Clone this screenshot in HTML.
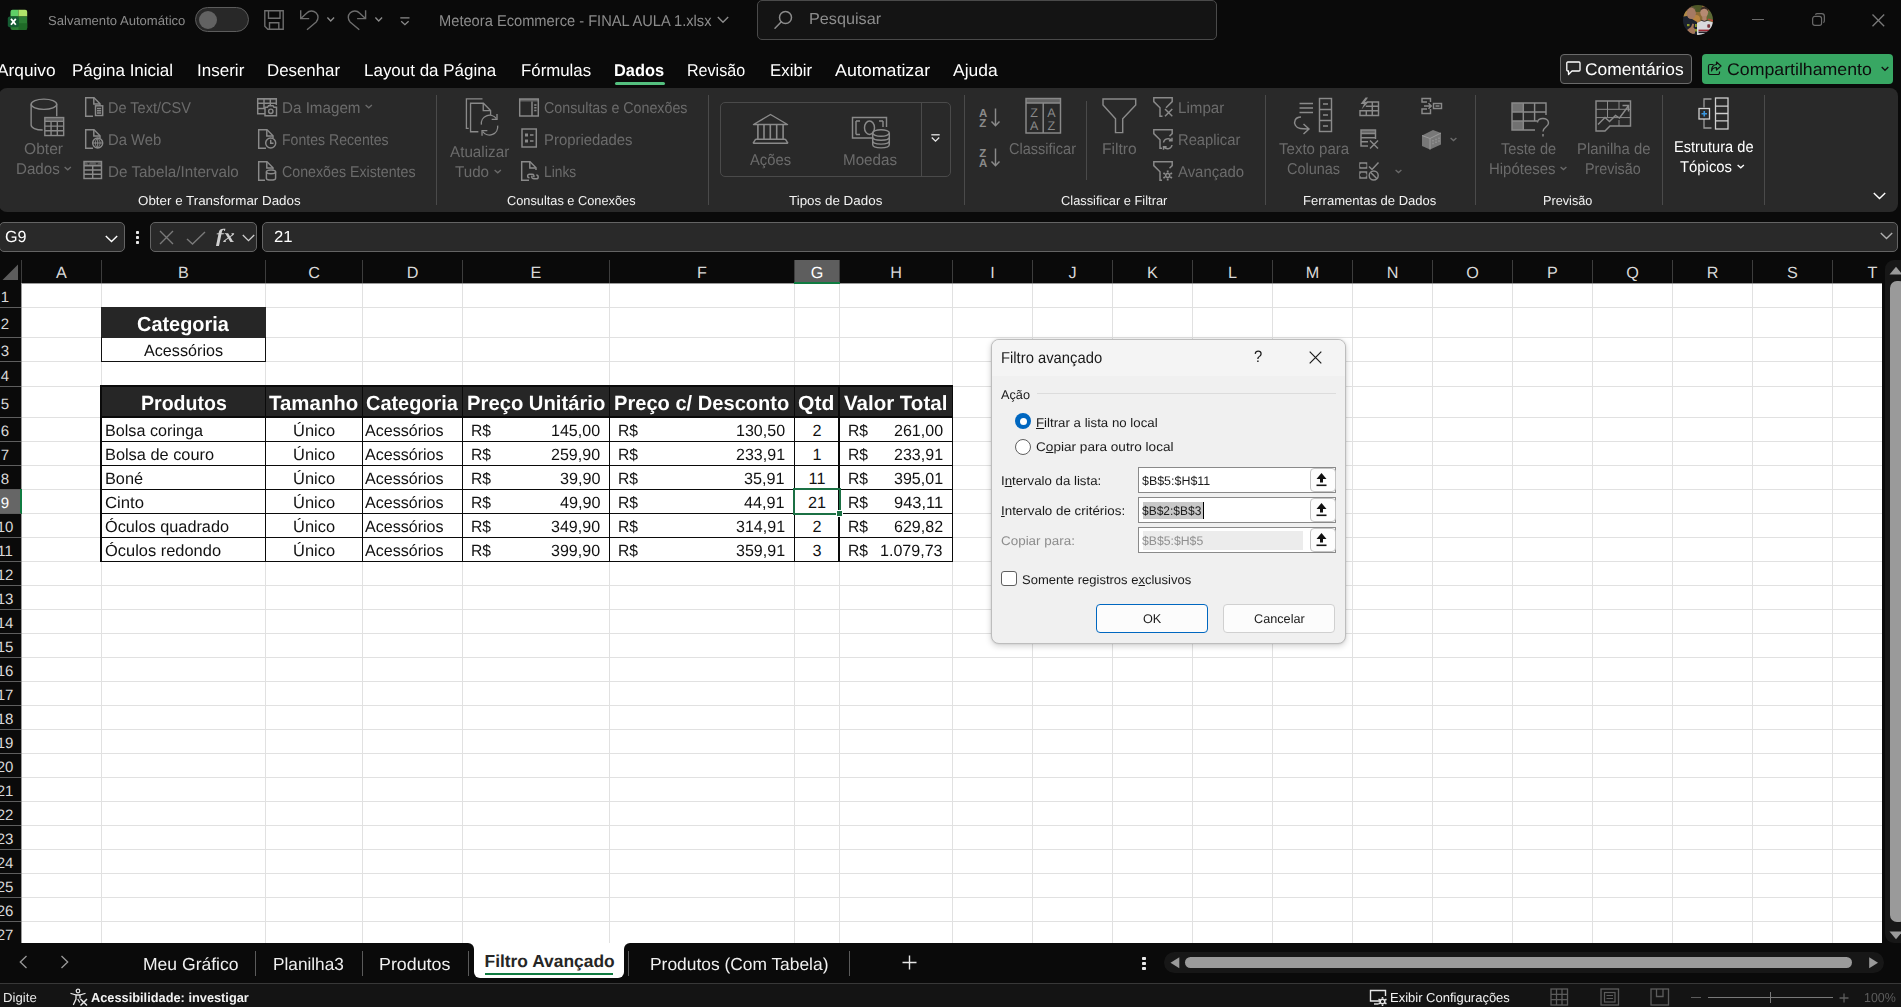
<!DOCTYPE html>
<html><head><meta charset="utf-8"><title>Excel</title>
<style>
html,body{margin:0;padding:0;}
body{width:1901px;height:1007px;overflow:hidden;background:#0a0a0a;position:relative;font-family:"Liberation Sans", sans-serif;}
body div,body svg,body span.t{position:absolute;box-sizing:border-box;}
span.t{white-space:nowrap;transform-origin:0 50%;display:block;text-rendering:geometricPrecision;}
svg text{text-rendering:geometricPrecision;}
svg{overflow:visible;}
</style></head><body>
<svg style="left:7px;top:9px;" width="21" height="22" viewBox="0 0 21 22" fill="none">
<path d="M3.500 2.800 A2 2 0 0 1 5.500 0.800 H11.500 V7.500 H3.500 Z" fill="#5fcf67"/>
<path d="M11.500 0.800 H18.200 A2 2 0 0 1 20.200 2.800 V7.500 H11.500 Z" fill="#b0e56a"/>
<path d="M3.500 7.500 H20.200 V19 A2 2 0 0 1 18.200 21 H5.500 A2 2 0 0 1 3.500 19 Z" fill="#2b7d33"/>
<path d="M11.500 14.200 H20.200 V19 A2 2 0 0 1 18.200 21 H11.500 Z" fill="#1f6a27"/>
<rect x="0.800" y="7.400" width="11.200" height="10.800" rx="2" fill="#155c33"/>
<path d="M4 9.900 L8.800 15.700 M8.800 9.900 L4 15.700" stroke="#fff" stroke-width="1.800"/>
</svg>
<span class="t" style="top:12.00px;font-size:13px;line-height:17px;height:17px;color:#8c8c8c;left:48.41px;transform:scaleX(1.0056);">Salvamento Automático</span>
<div style="left:195px;top:7px;width:54px;height:25px;background:#282828;border:1.500px solid #5c5c5c;border-radius:13px;"></div>
<div style="left:199px;top:11px;width:18px;height:18px;background:#626262;border-radius:9px;"></div>
<svg style="left:264px;top:10px;" width="20" height="20" viewBox="0 0 20 20" fill="none"><path d="M0.800 0.800 H19.200 V19.200 H3.800 L0.800 16.200 Z" stroke="#6e6e6e" stroke-width="1.400"/>
<path d="M4.500 0.800 V8.200 H16 V0.800 M5.500 19.200 V12.800 H14.800 V19.200" stroke="#6e6e6e" stroke-width="1.400"/></svg>
<svg style="left:300px;top:10px;" width="20" height="20" viewBox="0 0 20 20" fill="none"><path d="M0.700 0.300 V8.600 H9.200 M0.900 8.400 L6.800 3 A6.500 6.500 0 0 1 16.200 12 L7 19.700" stroke="#6e6e6e" stroke-width="1.400"/></svg>
<svg style="left:326.5px;top:17px;" width="8" height="6" viewBox="0 0 8 6" fill="none"><path d="M0.400 0.500 L3.700 4 L7.100 0.500" stroke="#8c8c8c" stroke-width="1.300"/></svg>
<svg style="left:347px;top:10px;" width="20" height="20" viewBox="0 0 20 20" fill="none"><path d="M18.600 0.300 V8.600 H10.100 M18.400 8.400 L12.500 3 A6.500 6.500 0 0 0 3.100 12 L12.300 19.700" stroke="#6e6e6e" stroke-width="1.400"/></svg>
<svg style="left:374.5px;top:17px;" width="8" height="6" viewBox="0 0 8 6" fill="none"><path d="M0.400 0.500 L3.700 4 L7.100 0.500" stroke="#8c8c8c" stroke-width="1.300"/></svg>
<svg style="left:399.5px;top:16.5px;" width="10" height="9" viewBox="0 0 10 9" fill="none"><path d="M0.300 0.800 H9.500 M1.200 4.300 L4.900 7.700 L8.600 4.300" stroke="#8c8c8c" stroke-width="1.300"/></svg>
<span class="t" style="top:11.70px;font-size:15.6px;line-height:20px;height:20px;color:#8c8c8c;left:439.34px;transform:scaleX(0.9406);">Meteora Ecommerce - FINAL AULA 1.xlsx</span>
<svg style="left:717px;top:16px;" width="12" height="8" viewBox="0 0 12 8" fill="none"><path d="M0.8 1 L6 6.2 L11.2 1" stroke="#8c8c8c" stroke-width="1.4"/></svg>
<div style="left:757px;top:0px;width:460px;height:39.5px;background:#141414;border:1px solid #4a4a4a;border-radius:5px;"></div>
<svg style="left:774px;top:10px;" width="20" height="20" viewBox="0 0 20 20" fill="none"><circle cx="11.5" cy="7.500" r="6" stroke="#8c8c8c" stroke-width="1.5"/><path d="M7.3 11.8 L1 18.200" stroke="#8c8c8c" stroke-width="1.5" stroke-linecap="round"/></svg>
<span class="t" style="top:8.80px;font-size:16px;line-height:21px;height:21px;color:#8c8c8c;left:809.27px;transform:scaleX(1.0124);">Pesquisar</span>
<svg style="left:1683px;top:5px;" width="30" height="30" viewBox="0 0 30 30" fill="none"><defs><clipPath id="av"><circle cx="15" cy="15" r="15"/></clipPath><filter id="bl" x="-10%" y="-10%" width="120%" height="120%"><feGaussianBlur stdDeviation="0.55"/></filter></defs>
<g clip-path="url(#av)"><g filter="url(#bl)"><rect x="-2" y="-2" width="34" height="34" fill="#8a6a35"/>
<rect x="9" y="-2" width="10" height="9" fill="#4d5626"/><rect x="24" y="6" width="8" height="10" fill="#5d6a35"/>
<ellipse cx="13" cy="14" rx="4" ry="4" fill="#b8843f"/><rect x="-2" y="6" width="6" height="6" fill="#b08a45"/>
<path d="M-2 12 L4 11 L14 17 V32 H-2 Z" fill="#1d212e"/>
<ellipse cx="8.300" cy="8.300" rx="4.600" ry="5.800" fill="#a67a63"/><path d="M4 5 Q8 0.500 13 4.500 L12.500 3.500 Q8 0 4 4 Z" fill="#6a5547"/>
<rect x="4" y="19" width="2.500" height="2.200" fill="#8c9a2a"/><rect x="12" y="19" width="1.800" height="3" fill="#8c9a2a"/><rect x="12" y="24" width="2" height="2.500" fill="#8c9a2a"/>
<path d="M4 25 L8 22 L9.500 18.500 L11 19 L10.500 22.500 L12 24 V28.500 L8 29.500 Z" fill="#a4775c"/>
<path d="M14 18 L18 16 H25 L31 17.500 V32 H14 Z" fill="#d9d9dc"/>
<ellipse cx="21.200" cy="7.200" rx="3.900" ry="5.200" fill="#b58a72"/><path d="M17.300 6 Q17.500 1.500 21.500 1.800 Q25.500 2 25.200 6.500 Q24 3.500 21 3.800 Q18.300 4 17.300 6 Z" fill="#3b2c25"/>
<rect x="19.300" y="11" width="4" height="5" fill="#ae846c"/><path d="M18.300 15.300 Q21.300 17.500 24.500 15.300" stroke="#2a2428" stroke-width="0.900" fill="none"/>
<path d="M24.500 14.500 L30 16.500 L30 15 L25.500 13.500 Z" fill="#c0443a"/>
<rect x="24.300" y="19.300" width="2.800" height="3.500" rx="0.800" fill="#7a3038"/>
<rect x="15.500" y="24.600" width="13" height="1.700" fill="#9a2630"/><rect x="15.500" y="26.600" width="12" height="1.500" fill="#22232a"/>
</g></g></svg>
<div style="left:1751.7px;top:18.7px;width:12.7px;height:1.3px;background:#6a6a6a;"></div>
<svg style="left:1811.5px;top:13.3px;" width="13" height="13" viewBox="0 0 14 14" fill="none"><rect x="0.7" y="3.7" width="9.6" height="9.6" rx="2.3" stroke="#6a6a6a" stroke-width="1.3"/><path d="M3.6 1.7 A2.6 2.6 0 0 1 5.8 0.7 H10.4 A2.9 2.9 0 0 1 13.3 3.6 V8.2 A2.6 2.6 0 0 1 12.3 10.4" stroke="#6a6a6a" stroke-width="1.3"/></svg>
<svg style="left:1871.7px;top:13.5px;" width="12.7" height="12.7" viewBox="0 0 12.7 12.7" fill="none"><path d="M0.5 0.5 L12.200 12.200 M12.200 0.5 L0.5 12.200" stroke="#7a7a7a" stroke-width="1.3"/></svg>
<span class="t" style="top:59.80px;font-size:17px;line-height:22px;height:22px;color:#fff;left:-2.78px;transform:scaleX(1.0167);">Arquivo</span>
<span class="t" style="top:59.80px;font-size:17px;line-height:22px;height:22px;color:#fff;left:72.24px;transform:scaleX(0.9998);">Página Inicial</span>
<span class="t" style="top:59.80px;font-size:17px;line-height:22px;height:22px;color:#fff;left:196.73px;transform:scaleX(1.0015);">Inserir</span>
<span class="t" style="top:59.80px;font-size:17px;line-height:22px;height:22px;color:#fff;left:267.24px;transform:scaleX(0.9917);">Desenhar</span>
<span class="t" style="top:59.80px;font-size:17px;line-height:22px;height:22px;color:#fff;left:364.24px;transform:scaleX(0.9982);">Layout da Página</span>
<span class="t" style="top:59.80px;font-size:17px;line-height:22px;height:22px;color:#fff;left:521.24px;transform:scaleX(0.9894);">Fórmulas</span>
<span class="t" style="top:59.80px;font-size:17px;line-height:22px;height:22px;color:#fff;left:687.28px;transform:scaleX(0.9460);">Revisão</span>
<span class="t" style="top:59.80px;font-size:17px;line-height:22px;height:22px;color:#fff;left:770.24px;transform:scaleX(0.9903);">Exibir</span>
<span class="t" style="top:59.80px;font-size:17px;line-height:22px;height:22px;color:#fff;left:835.20px;transform:scaleX(1.0485);">Automatizar</span>
<span class="t" style="top:59.80px;font-size:17px;line-height:22px;height:22px;color:#fff;left:953.22px;transform:scaleX(1.0258);">Ajuda</span>
<span class="t" style="top:59.80px;font-size:17px;line-height:22px;height:22px;color:#fff;font-weight:700;left:614.26px;transform:scaleX(0.9641);">Dados</span>
<div style="left:615px;top:82px;width:50px;height:3px;background:#54c07f;border-radius:1.5px;"></div>
<div style="left:1560px;top:54px;width:132px;height:30px;background:#262626;border:1px solid #6a6a6a;border-radius:4px;"></div>
<svg style="left:1566px;top:61px;" width="16" height="15" viewBox="0 0 16 15" fill="none"><path d="M1.5 1 H13 A1 1 0 0 1 14 2 V9 A1 1 0 0 1 13 10 H6 L2.5 13.500 V10 H1.5 A1 1 0 0 1 0.8 9 V2 A1 1 0 0 1 1.5 1 Z" stroke="#fff" stroke-width="1.3" stroke-linejoin="round"/></svg>
<span class="t" style="top:58.80px;font-size:17px;line-height:22px;height:22px;color:#fff;left:1585.22px;transform:scaleX(1.0231);">Comentários</span>
<div style="left:1702px;top:54px;width:191px;height:30px;background:#38a763;border-radius:4px;"></div>
<svg style="left:1707px;top:61px;" width="16" height="15" viewBox="0 0 16 15" fill="none"><path d="M6.500 3.500 H3 A1.500 1.500 0 0 0 1.500 5 V12 A1.500 1.500 0 0 0 3 13.500 H11 A1.500 1.500 0 0 0 12.500 12 V10.500 M9.500 1 L14 5 L9.500 9 V6.500 Q5.500 6.500 4.500 10 Q4.500 4 9.500 3.500 Z" stroke="#111" stroke-width="1.2" stroke-linejoin="round"/></svg>
<span class="t" style="top:58.80px;font-size:17px;line-height:22px;height:22px;color:#0d0d0d;left:1727.20px;transform:scaleX(1.0425);">Compartilhamento</span>
<svg style="left:1881px;top:66px;" width="8" height="6" viewBox="0 0 8 6" fill="none"><path d="M0.7 1 L4 4.3 L7.3 1" stroke="#111" stroke-width="1.3"/></svg>
<div style="left:-1.5px;top:222px;width:126px;height:30px;background:#292929;border:1px solid #646464;border-radius:5px;"></div>
<span class="t" style="top:226.50px;font-size:16px;line-height:21px;height:21px;color:#fff;left:4.77px;transform:scaleX(1.0092);">G9</span>
<svg style="left:105px;top:235.2px;" width="13" height="8" viewBox="0 0 13 8" fill="none"><path d="M0.800 1 L6.500 6.600 L12.200 1" stroke="#fff" stroke-width="1.400"/></svg>
<div style="left:135.5px;top:231px;width:3.5px;height:3.3px;background:#e9e9e9;border-radius:0.8px;"></div>
<div style="left:135.5px;top:236px;width:3.5px;height:3.3px;background:#e9e9e9;border-radius:0.8px;"></div>
<div style="left:135.5px;top:241px;width:3.5px;height:3.3px;background:#e9e9e9;border-radius:0.8px;"></div>
<div style="left:150px;top:222px;width:107px;height:30px;background:#292929;border:1px solid #646464;border-radius:5px;"></div>
<svg style="left:158.5px;top:230px;" width="15" height="15" viewBox="0 0 15 15" fill="none"><path d="M1 1 L14 14 M14 1 L1 14" stroke="#7a7a7a" stroke-width="1.400"/></svg>
<svg style="left:186px;top:231px;" width="20" height="14" viewBox="0 0 20 14" fill="none"><path d="M1 8 L6.500 13 L19 1" stroke="#7a7a7a" stroke-width="1.400"/></svg>
<span class="t" style="top:224.00px;font-size:19px;line-height:25px;height:25px;color:#d0d0d0;font-weight:700;font-style:italic;font-family:'Liberation Serif', serif;left:216.49px;transform:scaleX(1.1837);">fx</span>
<svg style="left:241.5px;top:234.3px;" width="13" height="8" viewBox="0 0 13 8" fill="none"><path d="M0.800 1 L6.500 6.600 L12.200 1" stroke="#d0d0d0" stroke-width="1.300"/></svg>
<div style="left:262px;top:222px;width:1635.5px;height:30px;background:#292929;border:1px solid #646464;border-radius:5px;"></div>
<span class="t" style="top:226.50px;font-size:16px;line-height:21px;height:21px;color:#fff;left:274.25px;transform:scaleX(1.0418);">21</span>
<svg style="left:1879.5px;top:231.8px;" width="13" height="8" viewBox="0 0 13 8" fill="none"><path d="M0.800 1 L6.500 6.600 L12.200 1" stroke="#b0b0b0" stroke-width="1.400"/></svg>
<div style="left:-1px;top:88px;width:1898.7px;height:124px;background:#292929;border-radius:8px;"></div>
<div style="left:436px;top:94.5px;width:1px;height:110px;background:#4a4a4a;"></div>
<div style="left:708px;top:94.5px;width:1px;height:110px;background:#4a4a4a;"></div>
<div style="left:964px;top:94.5px;width:1px;height:110px;background:#4a4a4a;"></div>
<div style="left:1265px;top:94.5px;width:1px;height:110px;background:#4a4a4a;"></div>
<div style="left:1475px;top:94.5px;width:1px;height:110px;background:#4a4a4a;"></div>
<div style="left:1662px;top:94.5px;width:1px;height:110px;background:#4a4a4a;"></div>
<div style="left:1764px;top:94.5px;width:1px;height:110px;background:#4a4a4a;"></div>
<div style="left:1086px;top:101px;width:1px;height:78.5px;background:#4a4a4a;"></div>
<svg style="left:29.5px;top:98px;" width="35" height="38.5" viewBox="0 0 36 40" fill="none"><ellipse cx="14.300" cy="6.500" rx="13.300" ry="5.300" stroke="#8a8a8a" stroke-width="1.45"/>
<path d="M1 6.500 V28 C1 31 6 33.200 13 33.300 M27.600 6.500 V19" stroke="#8a8a8a" stroke-width="1.45"/>
<rect x="15.200" y="20.300" width="19.600" height="18.700" stroke="#8a8a8a" stroke-width="1.45"/>
<rect x="15.200" y="20.300" width="19.600" height="4" fill="#8a8a8a" opacity="0.55"/>
<path d="M15.200 24.300 H34.800 M15.200 29.200 H34.800 M15.200 34.100 H34.800 M21.700 24.300 V39 M28.200 24.300 V39" stroke="#8a8a8a" stroke-width="1.45"/></svg>
<span class="t" style="top:140.30px;font-size:15.6px;line-height:20px;height:20px;color:#6b6b6b;left:24.30px;transform:scaleX(1.0004);">Obter</span>
<span class="t" style="top:159.70px;font-size:15.6px;line-height:20px;height:20px;color:#6b6b6b;left:15.82px;transform:scaleX(0.9697);">Dados</span>
<svg style="left:63.5px;top:165.5px;" width="7.5" height="6" viewBox="0 0 7.5 6" fill="none"><path d="M0.6 1 L3.75 3.8499999999999996 L6.9 1" stroke="#6b6b6b" stroke-width="1.3"/></svg>
<svg style="left:84px;top:96.8px;" width="20" height="20" viewBox="0 0 20 20" fill="none"><path d="M9 19.300 H1.700 V0.700 H10 L16 6.700 V9" stroke="#8a8a8a" stroke-width="1.45"/><path d="M9.800 0.900 V7 H15.800" stroke="#8a8a8a" stroke-width="1.45"/><rect x="11.500" y="8.800" width="7.200" height="9.700" stroke="#8a8a8a" stroke-width="1.45"/><path d="M13 11.500 H17.200 M13 13.700 H17.200 M13 15.900 H17.200" stroke="#8a8a8a" stroke-width="1.45"/></svg>
<svg style="left:84px;top:128.8px;" width="20" height="20" viewBox="0 0 20 20" fill="none"><path d="M9 19.300 H1.700 V0.700 H10 L16 6.700 V9" stroke="#8a8a8a" stroke-width="1.45"/><path d="M9.800 0.900 V7 H15.800" stroke="#8a8a8a" stroke-width="1.45"/><circle cx="13.700" cy="14" r="5" stroke="#8a8a8a" stroke-width="1.45"/><path d="M8.700 14 H18.700 M13.700 9 V19 M13.700 9 C10.500 12 10.500 16 13.700 19 M13.700 9 C16.900 12 16.900 16 13.700 19" stroke="#8a8a8a" stroke-width="1"/></svg>
<svg style="left:83px;top:160px;" width="20" height="20" viewBox="0 0 20 20" fill="none"><rect x="1" y="1.500" width="17.500" height="17" stroke="#8a8a8a" stroke-width="1.45"/><rect x="1" y="1.500" width="17.500" height="4.200" fill="#8a8a8a" opacity="0.5"/>
<path d="M1 5.700 H18.500 M1 10 H18.500 M1 14.300 H18.500 M9.700 5.700 V18.500" stroke="#8a8a8a" stroke-width="1.45"/><path d="M4 2.700 L5.500 4.700 L7 2.700 Z M12.400 2.700 L13.900 4.700 L15.400 2.700 Z" fill="#292929"/></svg>
<span class="t" style="top:98.50px;font-size:15.6px;line-height:20px;height:20px;color:#6b6b6b;left:107.55px;transform:scaleX(0.9307);">De Text/CSV</span>
<span class="t" style="top:130.50px;font-size:15.6px;line-height:20px;height:20px;color:#6b6b6b;left:107.53px;transform:scaleX(0.9510);">Da Web</span>
<span class="t" style="top:162.50px;font-size:15.6px;line-height:20px;height:20px;color:#6b6b6b;left:107.52px;transform:scaleX(0.9757);">De Tabela/Intervalo</span>
<svg style="left:257px;top:96.5px;" width="20" height="20" viewBox="0 0 20 20" fill="none"><path d="M8 16.700 H0.700 V1.700 H19.300 V8" stroke="#8a8a8a" stroke-width="1.45"/><path d="M0.700 6.300 H19.300 M0.700 11.500 H8 M7 1.700 V11.500 M13.300 1.700 V8" stroke="#8a8a8a" stroke-width="1.45"/>
<rect x="0.700" y="1.700" width="18.600" height="1.500" fill="#8a8a8a" opacity="0.5"/>
<path d="M8 10.300 H10.500 L11.500 8.700 H16 L17 10.300 H19.500 V18.800 H8 Z" stroke="#8a8a8a" stroke-width="1.45"/><circle cx="13.800" cy="14.300" r="2.200" stroke="#8a8a8a" stroke-width="1.45"/></svg>
<svg style="left:257px;top:128.8px;" width="20" height="20" viewBox="0 0 20 20" fill="none"><path d="M9 19.300 H1.700 V0.700 H10 L16 6.700 V9" stroke="#8a8a8a" stroke-width="1.45"/><path d="M9.800 0.900 V7 H15.800" stroke="#8a8a8a" stroke-width="1.45"/><circle cx="13.700" cy="14" r="5" stroke="#8a8a8a" stroke-width="1.45"/><path d="M13.700 10.800 V14.300 H16.500" stroke="#8a8a8a" stroke-width="1.45"/></svg>
<svg style="left:257px;top:160.8px;" width="20" height="20" viewBox="0 0 20 20" fill="none"><path d="M8 19.300 H1.700 V0.700 H10 L16 6.700 V8.500" stroke="#8a8a8a" stroke-width="1.45"/><path d="M9.800 0.900 V7 H15.800" stroke="#8a8a8a" stroke-width="1.45"/><ellipse cx="14" cy="10.800" rx="4.600" ry="1.900" stroke="#8a8a8a" stroke-width="1.45"/><path d="M9.400 10.800 V17.200 C9.400 19.700 18.600 19.700 18.600 17.200 V10.800" stroke="#8a8a8a" stroke-width="1.45"/></svg>
<span class="t" style="top:98.50px;font-size:15.6px;line-height:20px;height:20px;color:#6b6b6b;left:281.82px;transform:scaleX(0.9740);">Da Imagem</span>
<svg style="left:365px;top:103.5px;" width="7.5" height="6" viewBox="0 0 7.5 6" fill="none"><path d="M0.6 1 L3.75 3.8499999999999996 L6.9 1" stroke="#6b6b6b" stroke-width="1.3"/></svg>
<span class="t" style="top:130.50px;font-size:15.6px;line-height:20px;height:20px;color:#6b6b6b;left:281.87px;transform:scaleX(0.9035);">Fontes Recentes</span>
<span class="t" style="top:162.50px;font-size:15.6px;line-height:20px;height:20px;color:#6b6b6b;left:281.86px;transform:scaleX(0.9114);">Conexões Existentes</span>
<span class="t" style="top:192.00px;font-size:13px;line-height:17px;height:17px;color:#f2f2f2;left:137.60px;transform:scaleX(1.0279);">Obter e Transformar Dados</span>
<svg style="left:464.5px;top:97.7px;" width="35" height="38.6" viewBox="0 0 37 42" fill="none"><path d="M3.500 33 H1 V1 H18.500" stroke="#8a8a8a" stroke-width="1.45"/>
<path d="M14 36.700 H5.500 V5.700 H19.500 L27.300 13.500 V18.500" stroke="#8a8a8a" stroke-width="1.45"/><path d="M19.300 6 V13.700 H27" stroke="#8a8a8a" stroke-width="1.45"/>
<path d="M17.300 29 A9 9 0 0 1 33.500 22.500 M35 30 A9 9 0 0 1 18.800 36.500" stroke="#8a8a8a" stroke-width="1.45"/>
<path d="M34.300 17.500 V23.300 H28.500 M18 41.200 V35.500 H23.800" stroke="#8a8a8a" stroke-width="1.45"/></svg>
<span class="t" style="top:142.70px;font-size:15.6px;line-height:20px;height:20px;color:#6b6b6b;left:449.81px;transform:scaleX(0.9760);">Atualizar</span>
<span class="t" style="top:162.70px;font-size:15.6px;line-height:20px;height:20px;color:#6b6b6b;left:454.82px;transform:scaleX(0.9727);">Tudo</span>
<svg style="left:493.7px;top:168.5px;" width="7.5" height="6" viewBox="0 0 7.5 6" fill="none"><path d="M0.6 1 L3.75 3.8499999999999996 L6.9 1" stroke="#6b6b6b" stroke-width="1.3"/></svg>
<svg style="left:519px;top:97.5px;" width="20" height="20" viewBox="0 0 20 20" fill="none"><rect x="0.700" y="1" width="18.600" height="17" stroke="#8a8a8a" stroke-width="1.45"/><rect x="0.700" y="1" width="18.600" height="2.500" fill="#8a8a8a" opacity="0.6"/><path d="M13 3.500 V18 M15.200 7 H17.500 M15.200 9.700 H17.500 M15.200 12.400 H17.500" stroke="#8a8a8a" stroke-width="1.45"/></svg>
<svg style="left:519px;top:128.3px;" width="20" height="20" viewBox="0 0 20 20" fill="none"><rect x="3" y="1" width="14.300" height="18" stroke="#8a8a8a" stroke-width="1.45"/><rect x="6" y="5.500" width="3" height="3" fill="#8a8a8a"/><rect x="6" y="11.500" width="3" height="3" fill="#8a8a8a"/><path d="M11 7 H14.500 M11 13 H14.500" stroke="#8a8a8a" stroke-width="1.45"/></svg>
<svg style="left:520px;top:160.5px;" width="20" height="20" viewBox="0 0 20 20" fill="none"><path d="M9 19.300 H1.700 V0.700 H10 L16 6.700 V9" stroke="#8a8a8a" stroke-width="1.45"/><path d="M9.800 0.900 V7 H15.800" stroke="#8a8a8a" stroke-width="1.45"/><path d="M9.500 16.800 C7 16.800 7 13.200 9.500 13.200 H12 C14 13.200 14.500 15 13.500 16.200 M16.300 14 C18.800 14 18.800 17.800 16.300 17.800 H13.800 C11.800 17.800 11.300 16 12.300 14.800" stroke="#8a8a8a" stroke-width="1.45"/></svg>
<span class="t" style="top:98.50px;font-size:15.6px;line-height:20px;height:20px;color:#6b6b6b;left:543.86px;transform:scaleX(0.9146);">Consultas e Conexões</span>
<span class="t" style="top:130.50px;font-size:15.6px;line-height:20px;height:20px;color:#6b6b6b;left:543.83px;transform:scaleX(0.9542);">Propriedades</span>
<span class="t" style="top:162.50px;font-size:15.6px;line-height:20px;height:20px;color:#6b6b6b;left:543.88px;transform:scaleX(0.8848);">Links</span>
<span class="t" style="top:192.00px;font-size:13px;line-height:17px;height:17px;color:#f2f2f2;left:507.43px;transform:scaleX(0.9827);">Consultas e Conexões</span>
<div style="left:720px;top:102px;width:231px;height:75px;border:1px solid #4a4a4a;border-radius:5px;"></div>
<div style="left:921px;top:102px;width:1px;height:75px;background:#4a4a4a;"></div>
<svg style="left:752px;top:113px;" width="37" height="32" viewBox="0 0 37 32" fill="none"><path d="M1.500 11.500 L18.500 1.500 L35.500 11.500 Z" stroke="#8a8a8a" stroke-width="1.45" stroke-linejoin="round"/>
<path d="M5.900 12 V26 M12 12 V26 M18.300 12 V26 M24.700 12 V26 M31.100 12 V26" stroke="#8a8a8a" stroke-width="1.600"/>
<path d="M3.500 26.300 H33.500 M1 30.300 H36 M3.500 26.300 L1 30.300 M33.500 26.300 L36 30.300" stroke="#8a8a8a" stroke-width="1.45"/></svg>
<span class="t" style="top:151.00px;font-size:15.6px;line-height:20px;height:20px;color:#6b6b6b;left:750.34px;transform:scaleX(0.9462);">Ações</span>
<svg style="left:851px;top:116px;" width="40" height="34" viewBox="0 0 40 34" fill="none"><path d="M21 22 H1.500 V1.500 H35.500 V11" stroke="#8a8a8a" stroke-width="1.45"/><path d="M5 5 H9 M5 5 V18.500 M5 18.500 H9 M32 5 H28 M32 5 V11" stroke="#8a8a8a" stroke-width="1.45"/>
<ellipse cx="18.500" cy="11.700" rx="5" ry="6.700" stroke="#8a8a8a" stroke-width="1.45"/>
<ellipse cx="30" cy="17" rx="8.300" ry="3.300" stroke="#8a8a8a" stroke-width="1.45"/><path d="M21.700 17 V28.500 C21.700 33 38.300 33 38.300 28.500 V17 M21.700 21 C21.700 25.300 38.300 25.300 38.300 21 M21.700 24.800 C21.700 29.200 38.300 29.200 38.300 24.800" stroke="#8a8a8a" stroke-width="1.45"/></svg>
<span class="t" style="top:151.00px;font-size:15.6px;line-height:20px;height:20px;color:#6b6b6b;left:843.32px;transform:scaleX(0.9735);">Moedas</span>
<svg style="left:931.3px;top:134px;" width="9" height="8" viewBox="0 0 9 8" fill="none"><path d="M0.300 0.800 H8.700" stroke="#e6e6e6" stroke-width="1.300"/><path d="M0.800 3.500 L4.500 7.200 L8.200 3.500" stroke="#e6e6e6" stroke-width="1.300"/></svg>
<span class="t" style="top:192.00px;font-size:13px;line-height:17px;height:17px;color:#f2f2f2;left:788.90px;transform:scaleX(1.0305);">Tipos de Dados</span>
<svg style="left:979px;top:106.5px;" width="22" height="21" viewBox="0 0 22 21" fill="none"><text x="0" y="9.5" font-family="Liberation Sans" font-weight="700" font-size="11.500" fill="#8a8a8a">A</text><text x="0.3" y="20" font-family="Liberation Sans" font-weight="700" font-size="11.500" fill="#8a8a8a">Z</text><path d="M16.500 1.500 V18.500 M12.500 14.500 L16.500 18.700 L20.500 14.500" stroke="#8a8a8a" stroke-width="1.45"/></svg>
<svg style="left:979px;top:146.5px;" width="22" height="21" viewBox="0 0 22 21" fill="none"><text x="0.3" y="9.5" font-family="Liberation Sans" font-weight="700" font-size="11.500" fill="#8a8a8a">Z</text><text x="0" y="20" font-family="Liberation Sans" font-weight="700" font-size="11.500" fill="#8a8a8a">A</text><path d="M16.500 1.500 V18.500 M12.500 14.500 L16.500 18.700 L20.500 14.500" stroke="#8a8a8a" stroke-width="1.45"/></svg>
<svg style="left:1025px;top:97px;" width="37" height="38" viewBox="0 0 37 38" fill="none"><rect x="1" y="1.500" width="34.500" height="34.500" stroke="#8a8a8a" stroke-width="1.45"/><rect x="1" y="1.500" width="34.500" height="4.500" fill="#8a8a8a" opacity="0.6"/><path d="M1 6 H35.500 M18.200 6 V36" stroke="#8a8a8a" stroke-width="1.45"/><text x="5.3" y="19.5" font-family="Liberation Sans" font-size="12.500" fill="#8a8a8a">Z</text><text x="5" y="32.5" font-family="Liberation Sans" font-size="12.500" fill="#8a8a8a">A</text><text x="22.3" y="19.5" font-family="Liberation Sans" font-size="12.500" fill="#8a8a8a">A</text><text x="22.6" y="32.5" font-family="Liberation Sans" font-size="12.500" fill="#8a8a8a">Z</text></svg>
<span class="t" style="top:140.00px;font-size:15.6px;line-height:20px;height:20px;color:#6b6b6b;left:1009.35px;transform:scaleX(0.9318);">Classificar</span>
<svg style="left:1101px;top:97px;" width="37" height="38" viewBox="0 0 37 38" fill="none"><path d="M2 2 H34.700 V8 L21.700 21.700 V35.600 H14.500 V21.700 L2 8 Z" stroke="#8a8a8a" stroke-width="1.45" stroke-linejoin="miter"/></svg>
<span class="t" style="top:140.00px;font-size:15.6px;line-height:20px;height:20px;color:#6b6b6b;left:1102.30px;transform:scaleX(1.0017);">Filtro</span>
<svg style="left:1153px;top:96.5px;" width="20" height="20" viewBox="0 0 20 20" fill="none"><path d="M9.500 19.300 H7 V10.700 L0.800 4.600 V0.800 H19.200 V4.600 L13 10.700" stroke="#8a8a8a" stroke-width="1.45"/><path d="M12 12 L19.300 19.300 M19.300 12 L12 19.300" stroke="#8a8a8a" stroke-width="1.45"/></svg>
<svg style="left:1153px;top:128.5px;" width="20" height="20" viewBox="0 0 20 20" fill="none"><path d="M9 19.300 H7 V10.700 L0.800 4.600 V0.800 H19.200 V4.600 L16.500 7.300" stroke="#8a8a8a" stroke-width="1.45"/><path d="M10.500 13.500 A4.500 4.500 0 0 1 18.500 11.500 M19 16 A4.500 4.500 0 0 1 11 18 M19 8.700 V11.800 H15.900 M10.500 20.800 V17.700 H13.600" stroke="#8a8a8a" stroke-width="1.45"/></svg>
<svg style="left:1153px;top:160.5px;" width="20" height="20" viewBox="0 0 20 20" fill="none"><path d="M9 19.300 H7 V10.700 L0.800 4.600 V0.800 H19.200 V4.600 L16.500 7.300" stroke="#8a8a8a" stroke-width="1.45"/><circle cx="14.700" cy="14.500" r="2" stroke="#8a8a8a" stroke-width="1.45"/><path d="M14.700 9.500 V11.500 M14.700 17.500 V19.500 M10.400 12 L12.100 13 M17.300 16 L19 17 M10.400 17 L12.100 16 M17.300 13 L19 12" stroke="#8a8a8a" stroke-width="1.800"/></svg>
<span class="t" style="top:98.50px;font-size:15.6px;line-height:20px;height:20px;color:#6b6b6b;left:1178.02px;transform:scaleX(0.9715);">Limpar</span>
<span class="t" style="top:130.50px;font-size:15.6px;line-height:20px;height:20px;color:#6b6b6b;left:1178.04px;transform:scaleX(0.9459);">Reaplicar</span>
<span class="t" style="top:162.50px;font-size:15.6px;line-height:20px;height:20px;color:#6b6b6b;left:1178.03px;transform:scaleX(0.9556);">Avançado</span>
<span class="t" style="top:192.00px;font-size:13px;line-height:17px;height:17px;color:#f2f2f2;left:1060.92px;transform:scaleX(0.9881);">Classificar e Filtrar</span>
<svg style="left:1293px;top:97px;" width="40" height="40" viewBox="0 0 40 40" fill="none"><path d="M6.500 6.500 H20 M6.500 11 H20 M6.500 15.500 H20" stroke="#8a8a8a" stroke-width="1.45"/>
<path d="M8 20 C2 20 0.500 25 2.500 28.500 C4.500 32 9 32 15 32 M10.500 27 L16 32 L10.500 37" stroke="#8a8a8a" stroke-width="1.45"/>
<rect x="26.500" y="1.500" width="12" height="33" stroke="#8a8a8a" stroke-width="1.45"/><path d="M26.500 12.500 H38.500 M26.500 23.500 H38.500 M30 7 H35 M30 18 H35 M30 29 H35" stroke="#8a8a8a" stroke-width="1.45"/></svg>
<span class="t" style="top:140.00px;font-size:15.6px;line-height:20px;height:20px;color:#6b6b6b;left:1278.82px;transform:scaleX(0.9641);">Texto para</span>
<span class="t" style="top:159.70px;font-size:15.6px;line-height:20px;height:20px;color:#6b6b6b;left:1287.35px;transform:scaleX(0.9265);">Colunas</span>
<svg style="left:1358.5px;top:97px;" width="21" height="20" viewBox="0 0 21 20" fill="none"><path d="M7.500 5 H19.500 V18.500 H1 V13" stroke="#8a8a8a" stroke-width="1.45"/><path d="M1 13.800 H19.500 M6.800 9.300 H19.500 M7.300 13.800 V18.500 M13.300 5 V18.500" stroke="#8a8a8a" stroke-width="1.45"/><path d="M6.500 0.500 L1.500 7 H5 L2.500 12.500 L9.500 5 H6 L9 0.500 Z" fill="#8a8a8a"/></svg>
<svg style="left:1358.5px;top:129px;" width="21" height="20" viewBox="0 0 21 20" fill="none"><rect x="2" y="1" width="14.500" height="16" stroke="#8a8a8a" stroke-width="1.45"/><rect x="2" y="1" width="14.500" height="3.500" fill="#8a8a8a" opacity="0.6"/><path d="M2 4.500 H16.500 M2 8.700 H16.500 M2 12.800 H16.500" stroke="#8a8a8a" stroke-width="1.45"/><rect x="9" y="10" width="12" height="10" fill="#292929"/><path d="M11 11.500 L19 19.500 M19 11.500 L11 19.500" stroke="#8a8a8a" stroke-width="1.45"/></svg>
<svg style="left:1358.5px;top:161px;" width="21" height="20" viewBox="0 0 21 20" fill="none"><path d="M1 2 H7.500 V7 H1 Z M1 11 H7.500 V17 H1 Z" stroke="#8a8a8a" stroke-width="1.45"/><path d="M1 4.500 H7.500 M1 14 H7.500" stroke="#292929" stroke-width="2.500"/><path d="M10 5.500 L13 8.500 L19.500 1.500" stroke="#8a8a8a" stroke-width="1.45"/><circle cx="14.700" cy="14.500" r="4.500" stroke="#8a8a8a" stroke-width="1.45"/><path d="M11.500 11.300 L17.900 17.700" stroke="#8a8a8a" stroke-width="1.45"/></svg>
<svg style="left:1395px;top:168.5px;" width="7" height="6" viewBox="0 0 7 6" fill="none"><path d="M0.6 1 L3.5 3.5999999999999996 L6.4 1" stroke="#6b6b6b" stroke-width="1.3"/></svg>
<svg style="left:1420.5px;top:97px;" width="21" height="20" viewBox="0 0 21 20" fill="none"><path d="M6 5 H1 V1.500 H9.500 V5 M6 12 H1 V16.500 H9.500 V12" stroke="#8a8a8a" stroke-width="1.45"/><path d="M3 9 H10 M7.500 6.300 L10.200 9 L7.500 11.700" stroke="#8a8a8a" stroke-width="1.45"/><rect x="12.500" y="6.500" width="8" height="5" stroke="#8a8a8a" stroke-width="1.45"/><path d="M14.500 9 H18.500" stroke="#8a8a8a" stroke-width="1.45"/></svg>
<svg style="left:1420.5px;top:128px;" width="21" height="22" viewBox="0 0 21 22" fill="none"><path d="M1 7.500 L12 2 L20 5 V16.500 L9 21.500 L1 18 Z" fill="#787878"/><path d="M1 7.500 L9 10.500 L20 5 M9 10.500 V21.500" stroke="#9a9a9a" stroke-width="1"/><path d="M12 12 V17 M15 10.800 V15.800 M18 9.500 V14.500" stroke="#9a9a9a" stroke-width="1.200" stroke-dasharray="1.500 1.200"/></svg>
<svg style="left:1449.5px;top:136.5px;" width="7" height="6" viewBox="0 0 7 6" fill="none"><path d="M0.6 1 L3.5 3.5999999999999996 L6.4 1" stroke="#6b6b6b" stroke-width="1.3"/></svg>
<span class="t" style="top:192.00px;font-size:13px;line-height:17px;height:17px;color:#f2f2f2;left:1302.61px;transform:scaleX(1.0029);">Ferramentas de Dados</span>
<svg style="left:1510.5px;top:101.5px;" width="40" height="36" viewBox="0 0 40 36" fill="none"><path d="M24 28 H1 V1 H35 V13" stroke="#8a8a8a" stroke-width="1.45"/><path d="M1 10 H35 M1 19 H26 M12.300 1 V28 M23.600 1 V19" stroke="#8a8a8a" stroke-width="1.45"/>
<rect x="1" y="1" width="11.300" height="9" fill="#8a8a8a" opacity="0.75"/><rect x="1" y="19" width="11.300" height="9" fill="#8a8a8a" opacity="0.75"/>
<path d="M26.500 20.500 C26.500 15 37.500 15 37.500 21 C37.500 25 32 25 32 29.500 M32 32 V34.500" stroke="#8a8a8a" stroke-width="1.45"/></svg>
<span class="t" style="top:140.00px;font-size:15.6px;line-height:20px;height:20px;color:#6b6b6b;left:1500.84px;transform:scaleX(0.9366);">Teste de</span>
<span class="t" style="top:159.70px;font-size:15.6px;line-height:20px;height:20px;color:#6b6b6b;left:1488.83px;transform:scaleX(0.9592);">Hipóteses</span>
<svg style="left:1560px;top:165.5px;" width="7" height="6" viewBox="0 0 7 6" fill="none"><path d="M0.6 1 L3.5 3.5999999999999996 L6.4 1" stroke="#6b6b6b" stroke-width="1.3"/></svg>
<svg style="left:1595px;top:99.5px;" width="37" height="33" viewBox="0 0 37 33" fill="none"><path d="M1 1 H35.500 V26 H15 L10 31 H1 Z" stroke="#8a8a8a" stroke-width="1.45"/><path d="M1 9.300 H35.500 M1 17.600 H35.500 M12.500 1 V17 M24 1 V9 M24 20 V26" stroke="#8a8a8a" stroke-width="1"/>
<path d="M3 24.500 L10 17.500 L14.500 21.500 L20.500 15.500 L24.500 18 L33 6.500 M27.500 5.500 H33.500 V11.500" stroke="#8a8a8a" stroke-width="1.45"/></svg>
<span class="t" style="top:140.00px;font-size:15.6px;line-height:20px;height:20px;color:#6b6b6b;left:1576.83px;transform:scaleX(0.9526);">Planilha de</span>
<span class="t" style="top:159.70px;font-size:15.6px;line-height:20px;height:20px;color:#6b6b6b;left:1585.36px;transform:scaleX(0.9183);">Previsão</span>
<span class="t" style="top:192.00px;font-size:13px;line-height:17px;height:17px;color:#f2f2f2;left:1543.43px;transform:scaleX(0.9756);">Previsão</span>
<svg style="left:1697.5px;top:96.5px;" width="32" height="34" viewBox="0 0 32 34" fill="none"><rect x="17.500" y="1" width="12.500" height="31" stroke="#cfcfcf" stroke-width="1.300"/><path d="M17.500 9.200 H30 M17.500 16.500 H30 M17.500 23.800 H30" stroke="#cfcfcf" stroke-width="1.300"/>
<path d="M13.500 2 H6 V10.500 M6 22 V31 H13.500" stroke="#9a9a9a" stroke-width="1.300"/>
<rect x="1" y="11.500" width="10.500" height="10.500" stroke="#cfcfcf" stroke-width="1.300"/><path d="M3.500 16.700 H9 M6.250 14 V19.500" stroke="#3a96dd" stroke-width="1.600"/></svg>
<span class="t" style="top:138.00px;font-size:15.6px;line-height:20px;height:20px;color:#fff;left:1673.84px;transform:scaleX(0.9360);">Estrutura de</span>
<span class="t" style="top:158.00px;font-size:15.6px;line-height:20px;height:20px;color:#fff;left:1680.33px;transform:scaleX(0.9525);">Tópicos</span>
<svg style="left:1737px;top:163.5px;" width="7.5" height="6" viewBox="0 0 7.5 6" fill="none"><path d="M0.6 1 L3.75 3.8499999999999996 L6.9 1" stroke="#fff" stroke-width="1.3"/></svg>
<svg style="left:1872.7px;top:191.7px;" width="13" height="8" viewBox="0 0 13 8" fill="none"><path d="M0.800 1 L6.500 6.600 L12.200 1" stroke="#fff" stroke-width="1.400"/></svg>
<div style="left:21px;top:283px;width:1861px;height:660px;background:#fff;"></div>
<div style="left:101px;top:283px;width:1px;height:660px;background:#e1e1e1;"></div>
<div style="left:265px;top:283px;width:1px;height:660px;background:#e1e1e1;"></div>
<div style="left:362px;top:283px;width:1px;height:660px;background:#e1e1e1;"></div>
<div style="left:462px;top:283px;width:1px;height:660px;background:#e1e1e1;"></div>
<div style="left:609px;top:283px;width:1px;height:660px;background:#e1e1e1;"></div>
<div style="left:794px;top:283px;width:1px;height:660px;background:#e1e1e1;"></div>
<div style="left:839px;top:283px;width:1px;height:660px;background:#e1e1e1;"></div>
<div style="left:952px;top:283px;width:1px;height:660px;background:#e1e1e1;"></div>
<div style="left:1032px;top:283px;width:1px;height:660px;background:#e1e1e1;"></div>
<div style="left:1112px;top:283px;width:1px;height:660px;background:#e1e1e1;"></div>
<div style="left:1192px;top:283px;width:1px;height:660px;background:#e1e1e1;"></div>
<div style="left:1272px;top:283px;width:1px;height:660px;background:#e1e1e1;"></div>
<div style="left:1352px;top:283px;width:1px;height:660px;background:#e1e1e1;"></div>
<div style="left:1432px;top:283px;width:1px;height:660px;background:#e1e1e1;"></div>
<div style="left:1512px;top:283px;width:1px;height:660px;background:#e1e1e1;"></div>
<div style="left:1592px;top:283px;width:1px;height:660px;background:#e1e1e1;"></div>
<div style="left:1672px;top:283px;width:1px;height:660px;background:#e1e1e1;"></div>
<div style="left:1752px;top:283px;width:1px;height:660px;background:#e1e1e1;"></div>
<div style="left:1832px;top:283px;width:1px;height:660px;background:#e1e1e1;"></div>
<div style="left:21px;top:307px;width:1861px;height:1px;background:#e1e1e1;"></div>
<div style="left:21px;top:337px;width:1861px;height:1px;background:#e1e1e1;"></div>
<div style="left:21px;top:361px;width:1861px;height:1px;background:#e1e1e1;"></div>
<div style="left:21px;top:386px;width:1861px;height:1px;background:#e1e1e1;"></div>
<div style="left:21px;top:417px;width:1861px;height:1px;background:#e1e1e1;"></div>
<div style="left:21px;top:441px;width:1861px;height:1px;background:#e1e1e1;"></div>
<div style="left:21px;top:465px;width:1861px;height:1px;background:#e1e1e1;"></div>
<div style="left:21px;top:489px;width:1861px;height:1px;background:#e1e1e1;"></div>
<div style="left:21px;top:513px;width:1861px;height:1px;background:#e1e1e1;"></div>
<div style="left:21px;top:537px;width:1861px;height:1px;background:#e1e1e1;"></div>
<div style="left:21px;top:561px;width:1861px;height:1px;background:#e1e1e1;"></div>
<div style="left:21px;top:585px;width:1861px;height:1px;background:#e1e1e1;"></div>
<div style="left:21px;top:609px;width:1861px;height:1px;background:#e1e1e1;"></div>
<div style="left:21px;top:633px;width:1861px;height:1px;background:#e1e1e1;"></div>
<div style="left:21px;top:657px;width:1861px;height:1px;background:#e1e1e1;"></div>
<div style="left:21px;top:681px;width:1861px;height:1px;background:#e1e1e1;"></div>
<div style="left:21px;top:705px;width:1861px;height:1px;background:#e1e1e1;"></div>
<div style="left:21px;top:729px;width:1861px;height:1px;background:#e1e1e1;"></div>
<div style="left:21px;top:753px;width:1861px;height:1px;background:#e1e1e1;"></div>
<div style="left:21px;top:777px;width:1861px;height:1px;background:#e1e1e1;"></div>
<div style="left:21px;top:801px;width:1861px;height:1px;background:#e1e1e1;"></div>
<div style="left:21px;top:825px;width:1861px;height:1px;background:#e1e1e1;"></div>
<div style="left:21px;top:849px;width:1861px;height:1px;background:#e1e1e1;"></div>
<div style="left:21px;top:873px;width:1861px;height:1px;background:#e1e1e1;"></div>
<div style="left:21px;top:897px;width:1861px;height:1px;background:#e1e1e1;"></div>
<div style="left:21px;top:921px;width:1861px;height:1px;background:#e1e1e1;"></div>
<div style="left:0px;top:260px;width:1882px;height:23px;background:#0a0a0a;"></div>
<div style="left:0px;top:283px;width:21px;height:660px;background:#0a0a0a;"></div>
<div style="left:21px;top:283px;width:1861px;height:1px;background:#9b9b9b;"></div>
<div style="left:21px;top:283px;width:1px;height:660px;background:#9b9b9b;"></div>
<svg style="left:2px;top:264px;" width="17" height="17" viewBox="0 0 17 17" fill="none"><path d="M16 0.500 V16 H0.500 Z" fill="#5c5c5c"/></svg>
<div style="left:21px;top:260px;width:1px;height:23px;background:#3d3d3d;"></div>
<div style="left:101px;top:260px;width:1px;height:23px;background:#3d3d3d;"></div>
<div style="left:265px;top:260px;width:1px;height:23px;background:#3d3d3d;"></div>
<div style="left:362px;top:260px;width:1px;height:23px;background:#3d3d3d;"></div>
<div style="left:462px;top:260px;width:1px;height:23px;background:#3d3d3d;"></div>
<div style="left:609px;top:260px;width:1px;height:23px;background:#3d3d3d;"></div>
<div style="left:794px;top:260px;width:1px;height:23px;background:#3d3d3d;"></div>
<div style="left:839px;top:260px;width:1px;height:23px;background:#3d3d3d;"></div>
<div style="left:952px;top:260px;width:1px;height:23px;background:#3d3d3d;"></div>
<div style="left:1032px;top:260px;width:1px;height:23px;background:#3d3d3d;"></div>
<div style="left:1112px;top:260px;width:1px;height:23px;background:#3d3d3d;"></div>
<div style="left:1192px;top:260px;width:1px;height:23px;background:#3d3d3d;"></div>
<div style="left:1272px;top:260px;width:1px;height:23px;background:#3d3d3d;"></div>
<div style="left:1352px;top:260px;width:1px;height:23px;background:#3d3d3d;"></div>
<div style="left:1432px;top:260px;width:1px;height:23px;background:#3d3d3d;"></div>
<div style="left:1512px;top:260px;width:1px;height:23px;background:#3d3d3d;"></div>
<div style="left:1592px;top:260px;width:1px;height:23px;background:#3d3d3d;"></div>
<div style="left:1672px;top:260px;width:1px;height:23px;background:#3d3d3d;"></div>
<div style="left:1752px;top:260px;width:1px;height:23px;background:#3d3d3d;"></div>
<div style="left:1832px;top:260px;width:1px;height:23px;background:#3d3d3d;"></div>
<div style="left:795px;top:260px;width:44px;height:23px;background:#5e5e5e;"></div>
<div style="left:794px;top:282px;width:46px;height:2px;background:#107c41;"></div>
<span class="t" style="top:262.70px;font-size:16.2px;line-height:21px;height:21px;color:#d9d9d9;left:56.09px;">A</span>
<span class="t" style="top:262.70px;font-size:16.2px;line-height:21px;height:21px;color:#d9d9d9;left:178.09px;">B</span>
<span class="t" style="top:262.70px;font-size:16.2px;line-height:21px;height:21px;color:#d9d9d9;left:308.15px;">C</span>
<span class="t" style="top:262.70px;font-size:16.2px;line-height:21px;height:21px;color:#d9d9d9;left:406.65px;">D</span>
<span class="t" style="top:262.70px;font-size:16.2px;line-height:21px;height:21px;color:#d9d9d9;left:530.59px;">E</span>
<span class="t" style="top:262.70px;font-size:16.2px;line-height:21px;height:21px;color:#d9d9d9;left:697.05px;">F</span>
<span class="t" style="top:262.70px;font-size:16.2px;line-height:21px;height:21px;color:#fff;left:810.70px;">G</span>
<span class="t" style="top:262.70px;font-size:16.2px;line-height:21px;height:21px;color:#d9d9d9;left:890.15px;">H</span>
<span class="t" style="top:262.70px;font-size:16.2px;line-height:21px;height:21px;color:#d9d9d9;left:990.25px;">I</span>
<span class="t" style="top:262.70px;font-size:16.2px;line-height:21px;height:21px;color:#d9d9d9;left:1068.45px;">J</span>
<span class="t" style="top:262.70px;font-size:16.2px;line-height:21px;height:21px;color:#d9d9d9;left:1147.09px;">K</span>
<span class="t" style="top:262.70px;font-size:16.2px;line-height:21px;height:21px;color:#d9d9d9;left:1227.99px;">L</span>
<span class="t" style="top:262.70px;font-size:16.2px;line-height:21px;height:21px;color:#d9d9d9;left:1305.76px;">M</span>
<span class="t" style="top:262.70px;font-size:16.2px;line-height:21px;height:21px;color:#d9d9d9;left:1386.65px;">N</span>
<span class="t" style="top:262.70px;font-size:16.2px;line-height:21px;height:21px;color:#d9d9d9;left:1466.20px;">O</span>
<span class="t" style="top:262.70px;font-size:16.2px;line-height:21px;height:21px;color:#d9d9d9;left:1547.09px;">P</span>
<span class="t" style="top:262.70px;font-size:16.2px;line-height:21px;height:21px;color:#d9d9d9;left:1626.20px;">Q</span>
<span class="t" style="top:262.70px;font-size:16.2px;line-height:21px;height:21px;color:#d9d9d9;left:1706.65px;">R</span>
<span class="t" style="top:262.70px;font-size:16.2px;line-height:21px;height:21px;color:#d9d9d9;left:1787.09px;">S</span>
<span class="t" style="top:262.70px;font-size:16.2px;line-height:21px;height:21px;color:#d9d9d9;left:1867.55px;">T</span>
<span class="t" style="top:288.00px;font-size:15px;line-height:20px;height:20px;color:#d9d9d9;left:0.83px;">1</span>
<div style="left:0px;top:307px;width:21px;height:1px;background:#5e5e5e;"></div>
<span class="t" style="top:315.00px;font-size:15px;line-height:20px;height:20px;color:#d9d9d9;left:0.83px;">2</span>
<div style="left:0px;top:337px;width:21px;height:1px;background:#5e5e5e;"></div>
<span class="t" style="top:342.00px;font-size:15px;line-height:20px;height:20px;color:#d9d9d9;left:0.83px;">3</span>
<div style="left:0px;top:361px;width:21px;height:1px;background:#5e5e5e;"></div>
<span class="t" style="top:366.50px;font-size:15px;line-height:20px;height:20px;color:#d9d9d9;left:0.83px;">4</span>
<div style="left:0px;top:386px;width:21px;height:1px;background:#5e5e5e;"></div>
<span class="t" style="top:394.50px;font-size:15px;line-height:20px;height:20px;color:#d9d9d9;left:0.83px;">5</span>
<div style="left:0px;top:417px;width:21px;height:1px;background:#5e5e5e;"></div>
<span class="t" style="top:422.00px;font-size:15px;line-height:20px;height:20px;color:#d9d9d9;left:0.83px;">6</span>
<div style="left:0px;top:441px;width:21px;height:1px;background:#5e5e5e;"></div>
<span class="t" style="top:446.00px;font-size:15px;line-height:20px;height:20px;color:#d9d9d9;left:0.83px;">7</span>
<div style="left:0px;top:465px;width:21px;height:1px;background:#5e5e5e;"></div>
<span class="t" style="top:470.00px;font-size:15px;line-height:20px;height:20px;color:#d9d9d9;left:0.83px;">8</span>
<div style="left:0px;top:489px;width:21px;height:1px;background:#5e5e5e;"></div>
<div style="left:0px;top:490px;width:21px;height:23px;background:#666;"></div>
<div style="left:20px;top:489px;width:2px;height:25px;background:#107c41;"></div>
<span class="t" style="top:494.00px;font-size:15px;line-height:20px;height:20px;color:#fff;left:0.83px;">9</span>
<div style="left:0px;top:513px;width:21px;height:1px;background:#5e5e5e;"></div>
<span class="t" style="top:518.00px;font-size:15px;line-height:20px;height:20px;color:#d9d9d9;left:-3.34px;">10</span>
<div style="left:0px;top:537px;width:21px;height:1px;background:#5e5e5e;"></div>
<span class="t" style="top:542.00px;font-size:15px;line-height:20px;height:20px;color:#d9d9d9;left:-2.79px;">11</span>
<div style="left:0px;top:561px;width:21px;height:1px;background:#5e5e5e;"></div>
<span class="t" style="top:566.00px;font-size:15px;line-height:20px;height:20px;color:#d9d9d9;left:-3.34px;">12</span>
<div style="left:0px;top:585px;width:21px;height:1px;background:#5e5e5e;"></div>
<span class="t" style="top:590.00px;font-size:15px;line-height:20px;height:20px;color:#d9d9d9;left:-3.34px;">13</span>
<div style="left:0px;top:609px;width:21px;height:1px;background:#5e5e5e;"></div>
<span class="t" style="top:614.00px;font-size:15px;line-height:20px;height:20px;color:#d9d9d9;left:-3.34px;">14</span>
<div style="left:0px;top:633px;width:21px;height:1px;background:#5e5e5e;"></div>
<span class="t" style="top:638.00px;font-size:15px;line-height:20px;height:20px;color:#d9d9d9;left:-3.34px;">15</span>
<div style="left:0px;top:657px;width:21px;height:1px;background:#5e5e5e;"></div>
<span class="t" style="top:662.00px;font-size:15px;line-height:20px;height:20px;color:#d9d9d9;left:-3.34px;">16</span>
<div style="left:0px;top:681px;width:21px;height:1px;background:#5e5e5e;"></div>
<span class="t" style="top:686.00px;font-size:15px;line-height:20px;height:20px;color:#d9d9d9;left:-3.34px;">17</span>
<div style="left:0px;top:705px;width:21px;height:1px;background:#5e5e5e;"></div>
<span class="t" style="top:710.00px;font-size:15px;line-height:20px;height:20px;color:#d9d9d9;left:-3.34px;">18</span>
<div style="left:0px;top:729px;width:21px;height:1px;background:#5e5e5e;"></div>
<span class="t" style="top:734.00px;font-size:15px;line-height:20px;height:20px;color:#d9d9d9;left:-3.34px;">19</span>
<div style="left:0px;top:753px;width:21px;height:1px;background:#5e5e5e;"></div>
<span class="t" style="top:758.00px;font-size:15px;line-height:20px;height:20px;color:#d9d9d9;left:-3.34px;">20</span>
<div style="left:0px;top:777px;width:21px;height:1px;background:#5e5e5e;"></div>
<span class="t" style="top:782.00px;font-size:15px;line-height:20px;height:20px;color:#d9d9d9;left:-3.34px;">21</span>
<div style="left:0px;top:801px;width:21px;height:1px;background:#5e5e5e;"></div>
<span class="t" style="top:806.00px;font-size:15px;line-height:20px;height:20px;color:#d9d9d9;left:-3.34px;">22</span>
<div style="left:0px;top:825px;width:21px;height:1px;background:#5e5e5e;"></div>
<span class="t" style="top:830.00px;font-size:15px;line-height:20px;height:20px;color:#d9d9d9;left:-3.34px;">23</span>
<div style="left:0px;top:849px;width:21px;height:1px;background:#5e5e5e;"></div>
<span class="t" style="top:854.00px;font-size:15px;line-height:20px;height:20px;color:#d9d9d9;left:-3.34px;">24</span>
<div style="left:0px;top:873px;width:21px;height:1px;background:#5e5e5e;"></div>
<span class="t" style="top:878.00px;font-size:15px;line-height:20px;height:20px;color:#d9d9d9;left:-3.34px;">25</span>
<div style="left:0px;top:897px;width:21px;height:1px;background:#5e5e5e;"></div>
<span class="t" style="top:902.00px;font-size:15px;line-height:20px;height:20px;color:#d9d9d9;left:-3.34px;">26</span>
<div style="left:0px;top:921px;width:21px;height:1px;background:#5e5e5e;"></div>
<span class="t" style="top:926.00px;font-size:15px;line-height:20px;height:20px;color:#d9d9d9;left:-3.34px;">27</span>
<div style="left:0px;top:945px;width:21px;height:1px;background:#5e5e5e;"></div>
<div style="left:0px;top:969px;width:21px;height:1px;background:#5e5e5e;"></div>
<div style="left:0px;top:943px;width:1901px;height:64px;background:#0a0a0a;"></div>
<div style="left:101px;top:307px;width:165px;height:31px;background:#262626;"></div>
<span class="t" style="top:311.40px;font-size:20.6px;line-height:27px;height:27px;color:#fff;font-weight:700;left:137.10px;transform:scaleX(0.9667);">Categoria</span>
<div style="left:101px;top:337px;width:165px;height:25px;border:1.400px solid #111;border-top:none;"></div>
<span class="t" style="top:341.30px;font-size:16.2px;line-height:21px;height:21px;color:#111;left:144.27px;transform:scaleX(0.9985);">Acessórios</span>
<div style="left:100px;top:385px;width:853px;height:33px;background:#262626;"></div>
<div style="left:100px;top:385px;width:853px;height:2px;background:#0a0a0a;"></div>
<div style="left:100px;top:416px;width:853px;height:2px;background:#0a0a0a;"></div>
<span class="t" style="top:389.90px;font-size:20.6px;line-height:27px;height:27px;color:#fff;font-weight:700;left:140.62px;transform:scaleX(0.9496);">Produtos</span>
<span class="t" style="top:389.90px;font-size:20.6px;line-height:27px;height:27px;color:#fff;font-weight:700;left:268.58px;transform:scaleX(0.9925);">Tamanho</span>
<span class="t" style="top:389.90px;font-size:20.6px;line-height:27px;height:27px;color:#fff;font-weight:700;left:366.10px;transform:scaleX(0.9667);">Categoria</span>
<span class="t" style="top:389.90px;font-size:20.6px;line-height:27px;height:27px;color:#fff;font-weight:700;left:466.59px;transform:scaleX(0.9828);">Preço Unitário</span>
<span class="t" style="top:389.90px;font-size:20.6px;line-height:27px;height:27px;color:#fff;font-weight:700;left:613.60px;transform:scaleX(0.9758);">Preço c/ Desconto</span>
<span class="t" style="top:389.90px;font-size:20.6px;line-height:27px;height:27px;color:#fff;font-weight:700;left:798.05px;transform:scaleX(1.0245);">Qtd</span>
<span class="t" style="top:389.90px;font-size:20.6px;line-height:27px;height:27px;color:#fff;font-weight:700;left:844.08px;transform:scaleX(0.9959);">Valor Total</span>
<span class="t" style="top:420.50px;font-size:16.2px;line-height:21px;height:21px;color:#111;left:104.77px;transform:scaleX(0.9986);">Bolsa coringa</span>
<span class="t" style="top:420.50px;font-size:16.2px;line-height:21px;height:21px;color:#111;left:293.26px;transform:scaleX(1.0160);">Único</span>
<span class="t" style="top:420.50px;font-size:16.2px;line-height:21px;height:21px;color:#111;left:365.28px;transform:scaleX(0.9922);">Acessórios</span>
<span class="t" style="top:420.50px;font-size:16.2px;line-height:21px;height:21px;color:#111;left:471.29px;transform:scaleX(0.9686);">R$</span>
<span class="t" style="top:420.50px;font-size:16.2px;line-height:21px;height:21px;color:#111;left:551.28px;transform:scaleX(0.9907);">145,00</span>
<span class="t" style="top:420.50px;font-size:16.2px;line-height:21px;height:21px;color:#111;left:618.29px;transform:scaleX(0.9686);">R$</span>
<span class="t" style="top:420.50px;font-size:16.2px;line-height:21px;height:21px;color:#111;left:735.78px;transform:scaleX(0.9907);">130,50</span>
<span class="t" style="top:420.50px;font-size:16.2px;line-height:21px;height:21px;color:#111;left:812.49px;">2</span>
<span class="t" style="top:420.50px;font-size:16.2px;line-height:21px;height:21px;color:#111;left:848.29px;transform:scaleX(0.9686);">R$</span>
<span class="t" style="top:420.50px;font-size:16.2px;line-height:21px;height:21px;color:#111;left:893.78px;transform:scaleX(0.9907);">261,00</span>
<div style="left:100px;top:441px;width:853px;height:1px;background:#0a0a0a;"></div>
<span class="t" style="top:444.50px;font-size:16.2px;line-height:21px;height:21px;color:#111;left:104.76px;transform:scaleX(1.0097);">Bolsa de couro</span>
<span class="t" style="top:444.50px;font-size:16.2px;line-height:21px;height:21px;color:#111;left:293.26px;transform:scaleX(1.0160);">Único</span>
<span class="t" style="top:444.50px;font-size:16.2px;line-height:21px;height:21px;color:#111;left:365.28px;transform:scaleX(0.9922);">Acessórios</span>
<span class="t" style="top:444.50px;font-size:16.2px;line-height:21px;height:21px;color:#111;left:471.29px;transform:scaleX(0.9686);">R$</span>
<span class="t" style="top:444.50px;font-size:16.2px;line-height:21px;height:21px;color:#111;left:551.28px;transform:scaleX(0.9907);">259,90</span>
<span class="t" style="top:444.50px;font-size:16.2px;line-height:21px;height:21px;color:#111;left:618.29px;transform:scaleX(0.9686);">R$</span>
<span class="t" style="top:444.50px;font-size:16.2px;line-height:21px;height:21px;color:#111;left:735.78px;transform:scaleX(0.9907);">233,91</span>
<span class="t" style="top:444.50px;font-size:16.2px;line-height:21px;height:21px;color:#111;left:812.49px;">1</span>
<span class="t" style="top:444.50px;font-size:16.2px;line-height:21px;height:21px;color:#111;left:848.29px;transform:scaleX(0.9686);">R$</span>
<span class="t" style="top:444.50px;font-size:16.2px;line-height:21px;height:21px;color:#111;left:893.78px;transform:scaleX(0.9907);">233,91</span>
<div style="left:100px;top:465px;width:853px;height:1px;background:#0a0a0a;"></div>
<span class="t" style="top:468.50px;font-size:16.2px;line-height:21px;height:21px;color:#111;left:104.77px;transform:scaleX(1.0064);">Boné</span>
<span class="t" style="top:468.50px;font-size:16.2px;line-height:21px;height:21px;color:#111;left:293.26px;transform:scaleX(1.0160);">Único</span>
<span class="t" style="top:468.50px;font-size:16.2px;line-height:21px;height:21px;color:#111;left:365.28px;transform:scaleX(0.9922);">Acessórios</span>
<span class="t" style="top:468.50px;font-size:16.2px;line-height:21px;height:21px;color:#111;left:471.29px;transform:scaleX(0.9686);">R$</span>
<span class="t" style="top:468.50px;font-size:16.2px;line-height:21px;height:21px;color:#111;left:559.77px;transform:scaleX(1.0009);">39,90</span>
<span class="t" style="top:468.50px;font-size:16.2px;line-height:21px;height:21px;color:#111;left:618.29px;transform:scaleX(0.9686);">R$</span>
<span class="t" style="top:468.50px;font-size:16.2px;line-height:21px;height:21px;color:#111;left:744.27px;transform:scaleX(1.0009);">35,91</span>
<span class="t" style="top:468.50px;font-size:16.2px;line-height:21px;height:21px;color:#111;left:808.59px;">11</span>
<span class="t" style="top:468.50px;font-size:16.2px;line-height:21px;height:21px;color:#111;left:848.29px;transform:scaleX(0.9686);">R$</span>
<span class="t" style="top:468.50px;font-size:16.2px;line-height:21px;height:21px;color:#111;left:893.78px;transform:scaleX(0.9907);">395,01</span>
<div style="left:100px;top:489px;width:853px;height:1px;background:#0a0a0a;"></div>
<span class="t" style="top:492.50px;font-size:16.2px;line-height:21px;height:21px;color:#111;left:104.75px;transform:scaleX(1.0332);">Cinto</span>
<span class="t" style="top:492.50px;font-size:16.2px;line-height:21px;height:21px;color:#111;left:293.26px;transform:scaleX(1.0160);">Único</span>
<span class="t" style="top:492.50px;font-size:16.2px;line-height:21px;height:21px;color:#111;left:365.28px;transform:scaleX(0.9922);">Acessórios</span>
<span class="t" style="top:492.50px;font-size:16.2px;line-height:21px;height:21px;color:#111;left:471.29px;transform:scaleX(0.9686);">R$</span>
<span class="t" style="top:492.50px;font-size:16.2px;line-height:21px;height:21px;color:#111;left:559.77px;transform:scaleX(1.0009);">49,90</span>
<span class="t" style="top:492.50px;font-size:16.2px;line-height:21px;height:21px;color:#111;left:618.29px;transform:scaleX(0.9686);">R$</span>
<span class="t" style="top:492.50px;font-size:16.2px;line-height:21px;height:21px;color:#111;left:744.27px;transform:scaleX(1.0009);">44,91</span>
<span class="t" style="top:492.50px;font-size:16.2px;line-height:21px;height:21px;color:#111;left:807.99px;">21</span>
<span class="t" style="top:492.50px;font-size:16.2px;line-height:21px;height:21px;color:#111;left:848.29px;transform:scaleX(0.9686);">R$</span>
<span class="t" style="top:492.50px;font-size:16.2px;line-height:21px;height:21px;color:#111;left:893.76px;transform:scaleX(1.0153);">943,11</span>
<div style="left:100px;top:513px;width:853px;height:1px;background:#0a0a0a;"></div>
<span class="t" style="top:516.50px;font-size:16.2px;line-height:21px;height:21px;color:#111;left:104.77px;transform:scaleX(1.0061);">Óculos quadrado</span>
<span class="t" style="top:516.50px;font-size:16.2px;line-height:21px;height:21px;color:#111;left:293.26px;transform:scaleX(1.0160);">Único</span>
<span class="t" style="top:516.50px;font-size:16.2px;line-height:21px;height:21px;color:#111;left:365.28px;transform:scaleX(0.9922);">Acessórios</span>
<span class="t" style="top:516.50px;font-size:16.2px;line-height:21px;height:21px;color:#111;left:471.29px;transform:scaleX(0.9686);">R$</span>
<span class="t" style="top:516.50px;font-size:16.2px;line-height:21px;height:21px;color:#111;left:551.28px;transform:scaleX(0.9907);">349,90</span>
<span class="t" style="top:516.50px;font-size:16.2px;line-height:21px;height:21px;color:#111;left:618.29px;transform:scaleX(0.9686);">R$</span>
<span class="t" style="top:516.50px;font-size:16.2px;line-height:21px;height:21px;color:#111;left:735.78px;transform:scaleX(0.9907);">314,91</span>
<span class="t" style="top:516.50px;font-size:16.2px;line-height:21px;height:21px;color:#111;left:812.49px;">2</span>
<span class="t" style="top:516.50px;font-size:16.2px;line-height:21px;height:21px;color:#111;left:848.29px;transform:scaleX(0.9686);">R$</span>
<span class="t" style="top:516.50px;font-size:16.2px;line-height:21px;height:21px;color:#111;left:893.78px;transform:scaleX(0.9907);">629,82</span>
<div style="left:100px;top:537px;width:853px;height:1px;background:#0a0a0a;"></div>
<span class="t" style="top:540.50px;font-size:16.2px;line-height:21px;height:21px;color:#111;left:104.76px;transform:scaleX(1.0154);">Óculos redondo</span>
<span class="t" style="top:540.50px;font-size:16.2px;line-height:21px;height:21px;color:#111;left:293.26px;transform:scaleX(1.0160);">Único</span>
<span class="t" style="top:540.50px;font-size:16.2px;line-height:21px;height:21px;color:#111;left:365.28px;transform:scaleX(0.9922);">Acessórios</span>
<span class="t" style="top:540.50px;font-size:16.2px;line-height:21px;height:21px;color:#111;left:471.29px;transform:scaleX(0.9686);">R$</span>
<span class="t" style="top:540.50px;font-size:16.2px;line-height:21px;height:21px;color:#111;left:551.28px;transform:scaleX(0.9907);">399,90</span>
<span class="t" style="top:540.50px;font-size:16.2px;line-height:21px;height:21px;color:#111;left:618.29px;transform:scaleX(0.9686);">R$</span>
<span class="t" style="top:540.50px;font-size:16.2px;line-height:21px;height:21px;color:#111;left:735.78px;transform:scaleX(0.9907);">359,91</span>
<span class="t" style="top:540.50px;font-size:16.2px;line-height:21px;height:21px;color:#111;left:812.49px;">3</span>
<span class="t" style="top:540.50px;font-size:16.2px;line-height:21px;height:21px;color:#111;left:848.29px;transform:scaleX(0.9686);">R$</span>
<span class="t" style="top:540.50px;font-size:16.2px;line-height:21px;height:21px;color:#111;left:880.28px;transform:scaleX(0.9927);">1.079,73</span>
<div style="left:100px;top:561px;width:853px;height:1px;background:#0a0a0a;"></div>
<div style="left:100px;top:385px;width:2px;height:177px;background:#0a0a0a;"></div>
<div style="left:952px;top:385px;width:1px;height:177px;background:#0a0a0a;"></div>
<div style="left:265px;top:385px;width:1px;height:177px;background:#0a0a0a;"></div>
<div style="left:362px;top:385px;width:1px;height:177px;background:#0a0a0a;"></div>
<div style="left:462px;top:385px;width:1px;height:177px;background:#0a0a0a;"></div>
<div style="left:609px;top:385px;width:1px;height:177px;background:#0a0a0a;"></div>
<div style="left:794px;top:385px;width:1px;height:177px;background:#0a0a0a;"></div>
<div style="left:838px;top:385px;width:2px;height:177px;background:#0a0a0a;"></div>
<div style="left:793px;top:488px;width:48px;height:27px;border:2px solid #1b7044;"></div>
<div style="left:836px;top:510px;width:7px;height:7px;background:#1b7044;border:1px solid #fff;"></div>
<div style="left:1884.5px;top:260px;width:24px;height:683px;background:#171717;border-radius:9px;"></div>
<div style="left:1889.5px;top:281px;width:16px;height:641px;background:#9a9a9a;border-radius:7px;"></div>
<svg style="left:1889px;top:266px;" width="12" height="9" viewBox="0 0 12 9" fill="none"><path d="M0.500 8.500 L7 0.800 L13.500 8.500 Z" fill="#9a9a9a"/></svg>
<svg style="left:1889px;top:931px;" width="12" height="9" viewBox="0 0 12 9" fill="none"><path d="M0.500 0.500 L7 8.200 L13.500 0.500 Z" fill="#9a9a9a"/></svg>
<div style="left:991px;top:338.5px;width:355px;height:305px;background:#f0f0f0;border:1px solid #bdbdbd;border-radius:8px;box-shadow:0 2px 6px rgba(0,0,0,0.18),0 0 2px rgba(0,0,0,0.12);"></div>
<div style="left:992px;top:339.5px;width:353px;height:36.5px;background:#f4f4f4;border-radius:7px 7px 0 0;"></div>
<span class="t" style="top:348.30px;font-size:15.8px;line-height:21px;height:21px;color:#1a1a1a;left:1000.63px;transform:scaleX(0.9362);">Filtro avançado</span>
<span class="t" style="top:346.80px;font-size:16.5px;line-height:21px;height:21px;color:#1a1a1a;left:1253.63px;transform:scaleX(0.9004);">?</span>
<svg style="left:1308.5px;top:351px;" width="13" height="13" viewBox="0 0 13 13" fill="none"><path d="M0.700 0.700 L12.300 12.300 M12.300 0.700 L0.700 12.300" stroke="#1a1a1a" stroke-width="1.200"/></svg>
<span class="t" style="top:386.50px;font-size:12.6px;line-height:16px;height:16px;color:#1a1a1a;left:1000.73px;transform:scaleX(1.0105);">Ação</span>
<div style="left:1036.5px;top:393px;width:299.5px;height:1px;background:#dcdcdc;"></div>
<div style="left:1015px;top:413.2px;width:16px;height:16px;background:#0067c0;border-radius:8px;"></div>
<div style="left:1019.5px;top:417.7px;width:7px;height:7px;background:#fff;border-radius:4px;"></div>
<div style="left:1015px;top:438.5px;width:16px;height:16px;background:#fff;border:1px solid #5f5f5f;border-radius:8px;"></div>
<span class="t" style="top:415.10px;font-size:12.6px;line-height:16px;height:16px;color:#1a1a1a;left:1035.60px;transform:scaleX(1.0530);"><u>F</u>iltrar a lista no local</span>
<span class="t" style="top:439.30px;font-size:12.6px;line-height:16px;height:16px;color:#1a1a1a;left:1035.59px;transform:scaleX(1.0791);">C<u>o</u>piar para outro local</span>
<span class="t" style="top:472.50px;font-size:12.6px;line-height:16px;height:16px;color:#1a1a1a;left:1000.70px;transform:scaleX(1.0525);">I<u>n</u>tervalo da lista:</span>
<span class="t" style="top:502.60px;font-size:12.6px;line-height:16px;height:16px;color:#1a1a1a;left:1000.70px;transform:scaleX(1.0617);"><u>I</u>ntervalo de critérios:</span>
<span class="t" style="top:532.50px;font-size:12.6px;line-height:16px;height:16px;color:#8c8c8c;left:1000.70px;transform:scaleX(1.0665);">Copiar para:</span>
<div style="left:1138px;top:467px;width:198px;height:26px;background:#fff;border:1px solid #8a8a8a;"></div>
<div style="left:1309.5px;top:468px;width:26px;height:24px;background:#fdfdfd;border:1px solid #c4c4c4;border-radius:4px;"></div>
<svg style="left:1314.5px;top:472px;" width="13" height="15" viewBox="0 0 13 15" fill="none"><path d="M6.500 1 L11.500 7 H8 V10.500 H5 V7 H1.500 Z" fill="#111"/><path d="M1.500 13.300 H11.500" stroke="#111" stroke-width="1.600"/></svg>
<div style="left:1138px;top:497px;width:198px;height:26px;background:#fff;border:1px solid #8a8a8a;"></div>
<div style="left:1309.5px;top:498px;width:26px;height:24px;background:#fdfdfd;border:1px solid #c4c4c4;border-radius:4px;"></div>
<svg style="left:1314.5px;top:502px;" width="13" height="15" viewBox="0 0 13 15" fill="none"><path d="M6.500 1 L11.500 7 H8 V10.500 H5 V7 H1.500 Z" fill="#111"/><path d="M1.500 13.300 H11.500" stroke="#111" stroke-width="1.600"/></svg>
<div style="left:1138px;top:527px;width:198px;height:26px;background:#fff;border:1px solid #8a8a8a;"></div>
<div style="left:1309.5px;top:528px;width:26px;height:24px;background:#fdfdfd;border:1px solid #c4c4c4;border-radius:4px;"></div>
<svg style="left:1314.5px;top:532px;" width="13" height="15" viewBox="0 0 13 15" fill="none"><path d="M6.500 1 L11.500 7 H8 V10.500 H5 V7 H1.500 Z" fill="#111"/><path d="M1.500 13.300 H11.500" stroke="#111" stroke-width="1.600"/></svg>
<span class="t" style="top:472.50px;font-size:12.5px;line-height:16px;height:16px;color:#1a1a1a;left:1142.44px;transform:scaleX(0.9947);">$B$5:$H$11</span>
<div style="left:1142.5px;top:502px;width:60px;height:16.5px;background:#c8c8c8;"></div>
<span class="t" style="top:502.60px;font-size:12.5px;line-height:16px;height:16px;color:#1a1a1a;left:1142.46px;transform:scaleX(0.9588);">$B$2:$B$3</span>
<div style="left:1202.5px;top:502px;width:1px;height:16.5px;background:#000;"></div>
<div style="left:1142.5px;top:531px;width:160.5px;height:18.5px;background:#ececec;"></div>
<span class="t" style="top:532.50px;font-size:12.5px;line-height:16px;height:16px;color:#909090;left:1142.45px;transform:scaleX(0.9784);">$B$5:$H$5</span>
<div style="left:1001.3px;top:570.5px;width:15.5px;height:15.5px;background:#fff;border:1px solid #5f5f5f;border-radius:3px;"></div>
<span class="t" style="top:571.50px;font-size:12.6px;line-height:16px;height:16px;color:#1a1a1a;left:1021.71px;transform:scaleX(1.0331);">Somente registros e<u>x</u>clusivos</span>
<div style="left:1096px;top:604px;width:112px;height:29px;background:#fcfcfc;border:1.500px solid #0067c0;border-radius:4px;"></div>
<span class="t" style="top:611.30px;font-size:12.6px;line-height:16px;height:16px;color:#1a1a1a;left:1142.93px;transform:scaleX(1.0064);">OK</span>
<div style="left:1223px;top:604px;width:112px;height:29px;background:#fcfcfc;border:1px solid #d0d0d0;border-radius:4px;"></div>
<span class="t" style="top:611.30px;font-size:12.6px;line-height:16px;height:16px;color:#1a1a1a;left:1253.63px;transform:scaleX(1.0062);">Cancelar</span>
<div style="left:0px;top:943px;width:1901px;height:41px;background:#0a0a0a;"></div>
<svg style="left:19px;top:955px;" width="9" height="14" viewBox="0 0 9 14" fill="none"><path d="M7.500 1 L1.300 7 L7.500 13" stroke="#9a9a9a" stroke-width="1.300"/></svg>
<svg style="left:59.5px;top:955px;" width="9" height="14" viewBox="0 0 9 14" fill="none"><path d="M1.500 1 L7.700 7 L1.500 13" stroke="#9a9a9a" stroke-width="1.300"/></svg>
<span class="t" style="top:952.70px;font-size:17.4px;line-height:23px;height:23px;color:#f0f0f0;left:143.21px;transform:scaleX(1.0086);">Meu Gráfico</span>
<span class="t" style="top:952.70px;font-size:17.4px;line-height:23px;height:23px;color:#f0f0f0;left:272.93px;transform:scaleX(0.9898);">Planilha3</span>
<span class="t" style="top:952.70px;font-size:17.4px;line-height:23px;height:23px;color:#f0f0f0;left:379.00px;transform:scaleX(1.0247);">Produtos</span>
<span class="t" style="top:952.70px;font-size:17.4px;line-height:23px;height:23px;color:#f0f0f0;left:650.22px;transform:scaleX(0.9996);">Produtos (Com Tabela)</span>
<div style="left:255px;top:950.5px;width:1px;height:25.5px;background:#5a5a5a;"></div>
<div style="left:361.5px;top:950.5px;width:1px;height:25.5px;background:#5a5a5a;"></div>
<div style="left:468px;top:950.5px;width:1px;height:25.5px;background:#5a5a5a;"></div>
<div style="left:627.5px;top:950.5px;width:1px;height:25.5px;background:#5a5a5a;"></div>
<div style="left:849px;top:950.5px;width:1px;height:25.5px;background:#5a5a5a;"></div>
<div style="left:467px;top:943px;width:163px;height:7px;background:#fff;"></div>
<div style="left:466px;top:943px;width:7.5px;height:7.5px;background:#0a0a0a;border-radius:0 6px 0 0;"></div>
<div style="left:623.5px;top:943px;width:7.5px;height:7.5px;background:#0a0a0a;border-radius:6px 0 0 0;"></div>
<div style="left:473.5px;top:943px;width:150px;height:34.5px;background:#fff;border-radius:0 0 6px 6px;"></div>
<span class="t" style="top:950.20px;font-size:17.4px;line-height:23px;height:23px;color:#262626;font-weight:700;left:484.52px;transform:scaleX(1.0000);">Filtro Avançado</span>
<div style="left:484.5px;top:973px;width:128.5px;height:2px;background:#107c41;"></div>
<svg style="left:902px;top:955px;" width="15" height="15" viewBox="0 0 15 15" fill="none"><path d="M7.500 0.500 V14.500 M0.500 7.500 H14.500" stroke="#e6e6e6" stroke-width="1.400"/></svg>
<div style="left:1142.3px;top:957px;width:3.5px;height:3.3px;background:#e9e9e9;border-radius:0.8px;"></div>
<div style="left:1142.3px;top:962px;width:3.5px;height:3.3px;background:#e9e9e9;border-radius:0.8px;"></div>
<div style="left:1142.3px;top:967px;width:3.5px;height:3.3px;background:#e9e9e9;border-radius:0.8px;"></div>
<div style="left:1164px;top:952px;width:720px;height:21px;background:#171717;border-radius:10.5px;"></div>
<div style="left:1185px;top:957px;width:666.5px;height:11px;background:#9a9a9a;border-radius:6px;"></div>
<svg style="left:1169.8px;top:957px;" width="9.5" height="11.5" viewBox="0 0 9.5 11.5" fill="none"><path d="M9.300 0.300 L0.500 5.700 L9.300 11.200 Z" fill="#9a9a9a"/></svg>
<svg style="left:1869.2px;top:957px;" width="9.5" height="11.5" viewBox="0 0 9.5 11.5" fill="none"><path d="M0.200 0.300 L9 5.700 L0.200 11.200 Z" fill="#9a9a9a"/></svg>
<div style="left:0px;top:983px;width:1901px;height:24px;background:#141414;"></div>
<div style="left:0px;top:983px;width:1901px;height:1px;background:#383838;"></div>
<span class="t" style="top:988.50px;font-size:13px;line-height:17px;height:17px;color:#e6e6e6;left:2.91px;transform:scaleX(1.0149);">Digite</span>
<svg style="left:69.5px;top:988px;" width="19" height="18" viewBox="0 0 19 18" fill="none"><circle cx="8" cy="3" r="1.800" stroke="#e6e6e6" stroke-width="1.200"/><path d="M1 5.500 L6 7 V11 L3.500 16.500 M15 5.500 L10 7 V10 M6 7 H10 M8 11.500 L9.500 14" stroke="#e6e6e6" stroke-width="1.300" stroke-linecap="round"/><path d="M10.500 11 L17 17.500 M17 11 L10.500 17.500" stroke="#e6e6e6" stroke-width="1.500"/></svg>
<span class="t" style="top:988.50px;font-size:13px;line-height:17px;height:17px;color:#f2f2f2;font-weight:700;left:91.42px;transform:scaleX(0.9840);">Acessibilidade: investigar</span>
<svg style="left:1368.5px;top:988.5px;" width="19" height="17" viewBox="0 0 19 17" fill="none"><path d="M12 12 H1.500 V1.500 H16.500 V7" stroke="#e6e6e6" stroke-width="1.400"/><path d="M5 15 H9.500" stroke="#e6e6e6" stroke-width="1.400"/><circle cx="13.500" cy="12.500" r="2.300" stroke="#e6e6e6" stroke-width="1.500"/><path d="M13.500 8 V9.500 M13.500 15.500 V17 M9.500 10.200 L11 11 M16 14 L17.500 14.800 M9.500 14.800 L11 14 M16 11 L17.500 10.200" stroke="#e6e6e6" stroke-width="1.600"/></svg>
<span class="t" style="top:988.80px;font-size:13px;line-height:17px;height:17px;color:#f2f2f2;left:1390.42px;transform:scaleX(0.9991);">Exibir Configurações</span>
<svg style="left:1550px;top:988px;" width="19" height="18" viewBox="0 0 19 18" fill="none"><rect x="1" y="1" width="16.500" height="16" stroke="#5c5c5c" stroke-width="1.300"/><path d="M1 6.300 H17.500 M1 11.700 H17.500 M6.500 1 V17 M12 1 V17" stroke="#5c5c5c" stroke-width="1.300"/></svg>
<svg style="left:1600px;top:988px;" width="20" height="18" viewBox="0 0 20 18" fill="none"><rect x="1" y="1" width="17.500" height="16" stroke="#5c5c5c" stroke-width="1.300"/><rect x="4.500" y="4.500" width="10.500" height="9.500" stroke="#5c5c5c" stroke-width="1.200"/><path d="M6.500 7.500 H13 M6.500 10.500 H13" stroke="#5c5c5c" stroke-width="1.100"/></svg>
<svg style="left:1650px;top:988px;" width="20" height="18" viewBox="0 0 20 18" fill="none"><rect x="1" y="1" width="17.500" height="16" stroke="#5c5c5c" stroke-width="1.300"/><path d="M6.500 1 V8.500 H13 V1" stroke="#5c5c5c" stroke-width="1.300"/></svg>
<div style="left:1691px;top:996.5px;width:9.5px;height:1.3px;background:#5c5c5c;"></div>
<div style="left:1707.5px;top:996.5px;width:125px;height:1.2px;background:#7a7a7a;"></div>
<div style="left:1769.5px;top:991.5px;width:1.3px;height:11px;background:#7a7a7a;"></div>
<svg style="left:1838.5px;top:992.5px;" width="10" height="10" viewBox="0 0 10 10" fill="none"><path d="M5 0.500 V9.500 M0.500 5 H9.500" stroke="#5c5c5c" stroke-width="1.300"/></svg>
<span class="t" style="top:988.80px;font-size:13px;line-height:17px;height:17px;color:#5c5c5c;left:1864.44px;transform:scaleX(0.9577);">100%</span>
</body></html>
